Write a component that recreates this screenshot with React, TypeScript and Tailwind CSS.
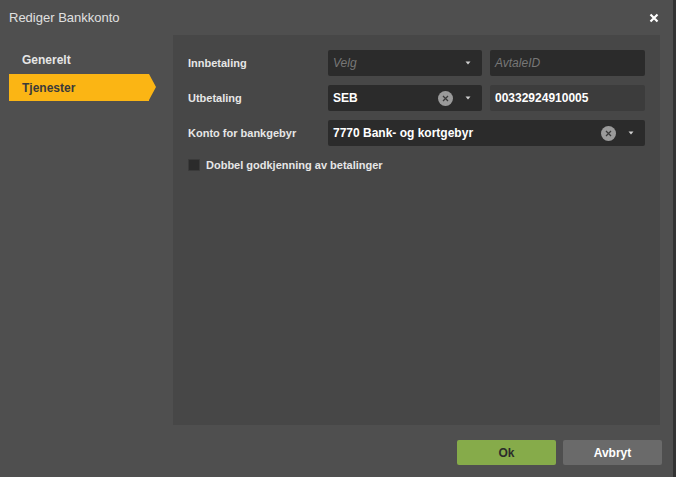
import React from "react";

const Caret = () => (
  <svg width="6" height="4" viewBox="0 0 6 4" className="shrink-0"><path d="M0.5 0.5h5L3 3.5z" fill="#d0d0d0" /></svg>
);
const Clear = () => (
  <div className="w-[15px] h-[15px] rounded-full bg-[#9a9a9a] flex items-center justify-center shrink-0">
    <svg width="7" height="7" viewBox="0 0 7 7"><path d="M1 1l5 5M6 1L1 6" stroke="#3a3a3a" strokeWidth="1.3" /></svg>
  </div>
);

export default function App() {
  return (
    <div className="w-[676px] h-[477px] bg-[#4f4f4f] border-r-[3px] border-[#333] flex flex-col text-[12px] text-white" style={{ fontFamily: "Arial, 'Liberation Sans', sans-serif" }}>
      <div className="h-[35px] flex items-center justify-between pl-[9px] pr-[14px]">
        <span className="text-[13px] text-[#e0e0e0]">Rediger Bankkonto</span>
        <svg width="10" height="10" viewBox="0 0 10 10"><path d="M1.5 1.5l7 7M8.5 1.5l-7 7" stroke="#fff" strokeWidth="2.2" /></svg>
      </div>
      <div className="flex h-[390px]">
        <div className="w-[173px] pt-[16px] pl-[9px] flex flex-col gap-[5px] font-bold">
          <div className="h-[18px] pl-[13px] text-[#e6e6e6] flex items-center">Generelt</div>
          <div className="relative w-[140px] h-[27px] bg-[#fbb514] pl-[13px] flex items-center text-[#3a3a3a]">
            Tjenester
            <div className="absolute right-[-7px] top-0 w-0 h-0 border-y-[13.5px] border-y-transparent border-l-[7px] border-l-[#fbb514]" />
          </div>
        </div>
        <div className="w-[487px] bg-[#474747] pt-[15px] pl-[15px] flex flex-col gap-[9px]">
          {[
            { l: "Innbetaling" },
            { l: "Utbetaling" },
            { l: "Konto for bankgebyr" },
          ].map((r, i) => (
            <div key={i} className="flex items-center h-[26px]">
              <div className="w-[140px] font-bold text-[11px] text-[#e6e6e6]">{r.l}</div>
              {i < 2 ? (
                <>
                  <div className="w-[154px] h-[26px] bg-[#2b2b2b] rounded-[2px] flex items-center px-[5px] gap-[12px]">
                    <span className={i === 0 ? "flex-1 italic text-[#777]" : "flex-1 font-bold"}>{i === 0 ? "Velg" : "SEB"}</span>
                    {i === 1 && <Clear />}
                    <span className="pr-[6px]"><Caret /></span>
                  </div>
                  <div className={`ml-[8px] w-[155px] h-[26px] rounded-[2px] flex items-center px-[5px] ${i === 0 ? "bg-[#2b2b2b] italic text-[#777]" : "bg-[#3c3c3c] font-bold"}`}>
                    {i === 0 ? "AvtaleID" : "00332924910005"}
                  </div>
                </>
              ) : (
                <div className="w-[317px] h-[26px] bg-[#2b2b2b] rounded-[2px] flex items-center px-[5px] gap-[12px]">
                  <span className="flex-1 font-bold">7770 Bank- og kortgebyr</span>
                  <Clear />
                  <span className="pr-[6px]"><Caret /></span>
                </div>
              )}
            </div>
          ))}
          <div className="flex items-center gap-[6px] mt-[1px] h-[18px]">
            <div className="w-[12px] h-[12px] bg-[#2b2b2b] border border-[#3a3a3a] rounded-[1px]" />
            <span className="font-bold text-[11px] text-[#e6e6e6]">Dobbel godkjenning av betalinger</span>
          </div>
        </div>
      </div>
      <div className="flex-1 flex justify-end items-start pt-[15px] pr-[11px] gap-[7px]">
        <button className="w-[99px] h-[25px] bg-[#86ab4a] rounded-[2px] text-[#2b2b2b] font-bold text-[12px]">Ok</button>
        <button className="w-[99px] h-[25px] bg-[#6a6a6a] rounded-[2px] text-white font-bold text-[12px]">Avbryt</button>
      </div>
    </div>
  );
}
